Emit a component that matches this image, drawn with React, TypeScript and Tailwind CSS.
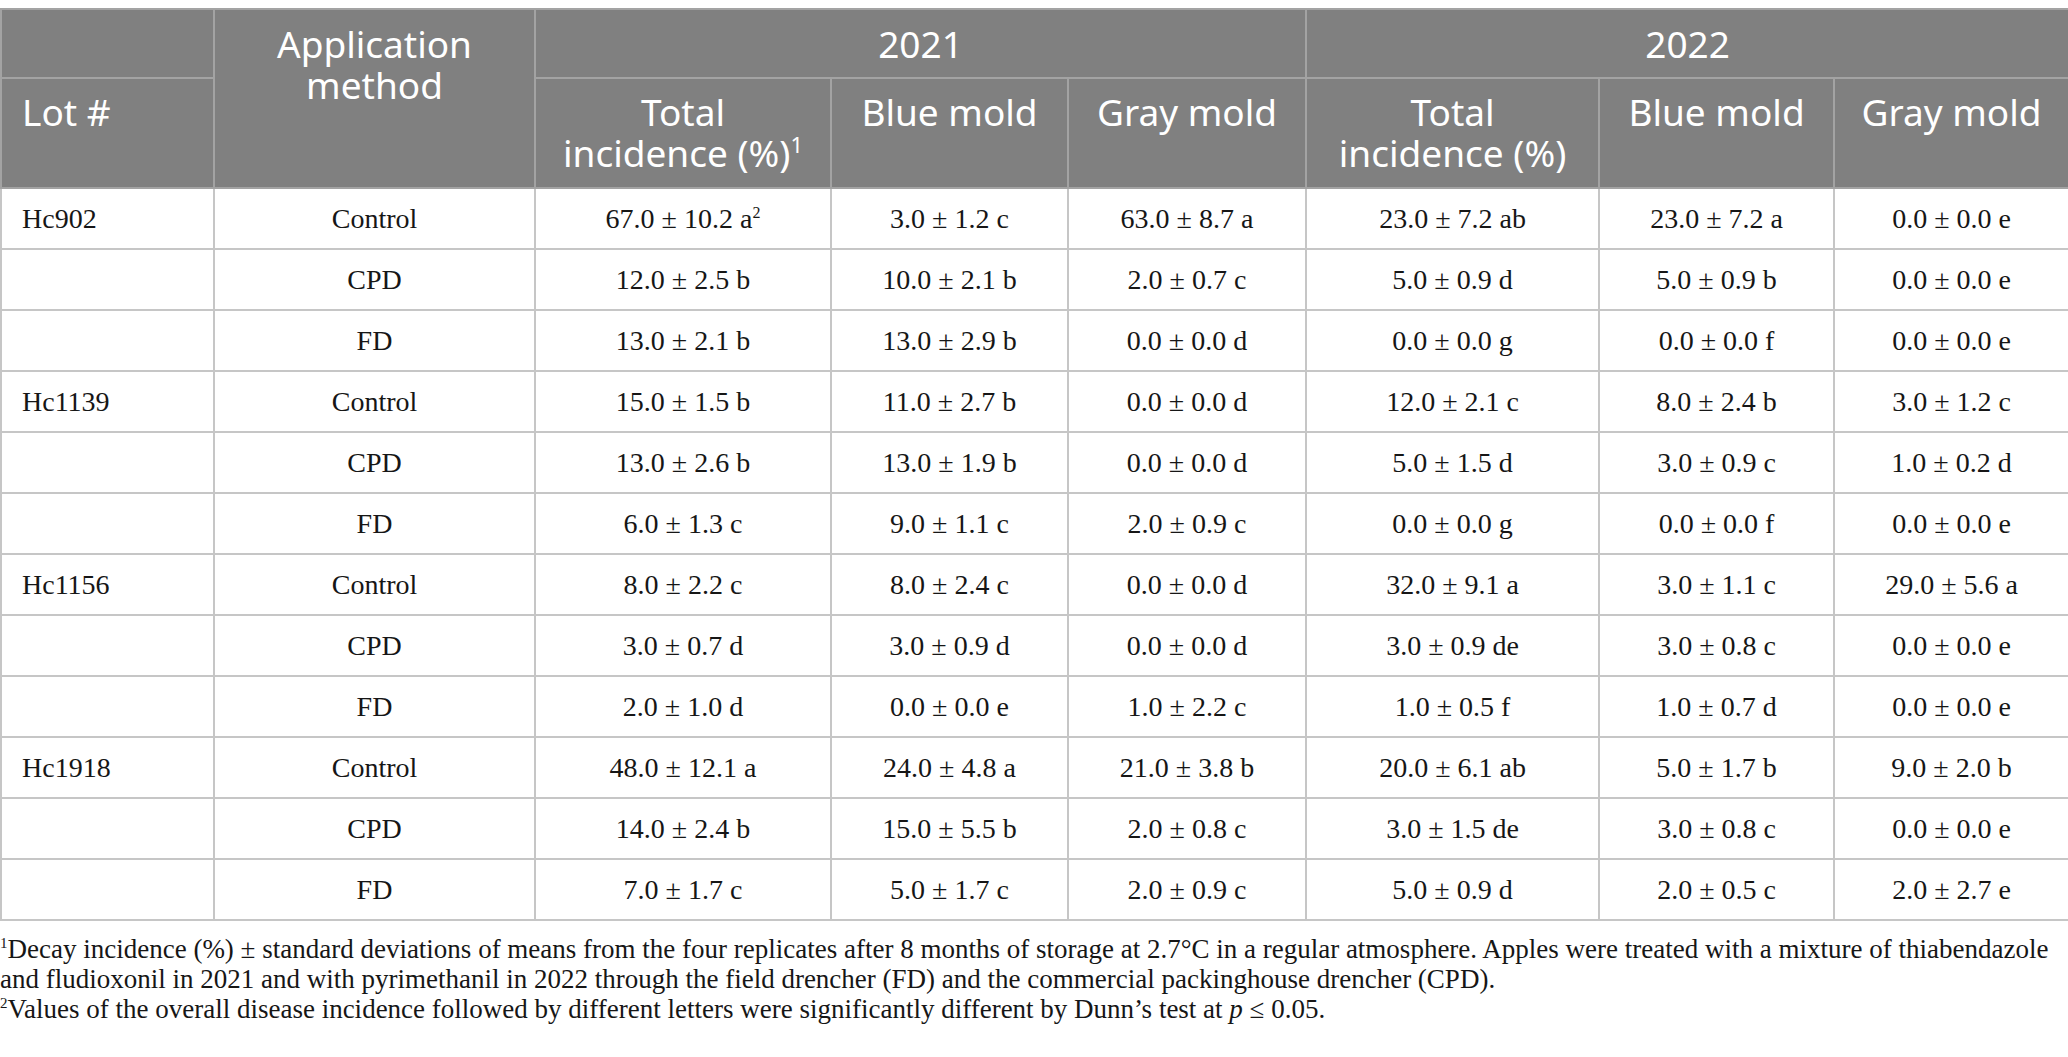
import React from 'react';

type Row = { lot: string; method: string; vals: React.ReactNode[] };

const rows: Row[] = [
  { lot: 'Hc902', method: 'Control', vals: [<>67.0 ± 10.2 a<sup className="text-[16px] relative -top-[10px]">2</sup></>, '3.0 ± 1.2 c', '63.0 ± 8.7 a', '23.0 ± 7.2 ab', '23.0 ± 7.2 a', '0.0 ± 0.0 e'] },
  { lot: '', method: 'CPD', vals: ['12.0 ± 2.5 b', '10.0 ± 2.1 b', '2.0 ± 0.7 c', '5.0 ± 0.9 d', '5.0 ± 0.9 b', '0.0 ± 0.0 e'] },
  { lot: '', method: 'FD', vals: ['13.0 ± 2.1 b', '13.0 ± 2.9 b', '0.0 ± 0.0 d', '0.0 ± 0.0 g', '0.0 ± 0.0 f', '0.0 ± 0.0 e'] },
  { lot: 'Hc1139', method: 'Control', vals: ['15.0 ± 1.5 b', '11.0 ± 2.7 b', '0.0 ± 0.0 d', '12.0 ± 2.1 c', '8.0 ± 2.4 b', '3.0 ± 1.2 c'] },
  { lot: '', method: 'CPD', vals: ['13.0 ± 2.6 b', '13.0 ± 1.9 b', '0.0 ± 0.0 d', '5.0 ± 1.5 d', '3.0 ± 0.9 c', '1.0 ± 0.2 d'] },
  { lot: '', method: 'FD', vals: ['6.0 ± 1.3 c', '9.0 ± 1.1 c', '2.0 ± 0.9 c', '0.0 ± 0.0 g', '0.0 ± 0.0 f', '0.0 ± 0.0 e'] },
  { lot: 'Hc1156', method: 'Control', vals: ['8.0 ± 2.2 c', '8.0 ± 2.4 c', '0.0 ± 0.0 d', '32.0 ± 9.1 a', '3.0 ± 1.1 c', '29.0 ± 5.6 a'] },
  { lot: '', method: 'CPD', vals: ['3.0 ± 0.7 d', '3.0 ± 0.9 d', '0.0 ± 0.0 d', '3.0 ± 0.9 de', '3.0 ± 0.8 c', '0.0 ± 0.0 e'] },
  { lot: '', method: 'FD', vals: ['2.0 ± 1.0 d', '0.0 ± 0.0 e', '1.0 ± 2.2 c', '1.0 ± 0.5 f', '1.0 ± 0.7 d', '0.0 ± 0.0 e'] },
  { lot: 'Hc1918', method: 'Control', vals: ['48.0 ± 12.1 a', '24.0 ± 4.8 a', '21.0 ± 3.8 b', '20.0 ± 6.1 ab', '5.0 ± 1.7 b', '9.0 ± 2.0 b'] },
  { lot: '', method: 'CPD', vals: ['14.0 ± 2.4 b', '15.0 ± 5.5 b', '2.0 ± 0.8 c', '3.0 ± 1.5 de', '3.0 ± 0.8 c', '0.0 ± 0.0 e'] },
  { lot: '', method: 'FD', vals: ['7.0 ± 1.7 c', '5.0 ± 1.7 c', '2.0 ± 0.9 c', '5.0 ± 0.9 d', '2.0 ± 0.5 c', '2.0 ± 2.7 e'] },
];

const widths = [213, 321, 296, 237, 238, 293, 235, 235];

const th = 'border-2 border-[#a3a3a3] align-top font-normal text-white';
const td = 'border-2 border-[#c6c6c6] text-center';

export default function App() {
  return (
    <div className="bg-white pt-2 w-[2068px] text-[#161616]">
      <table className="table-fixed border-collapse w-[2068px]">
        <colgroup>
          {widths.map((w, i) => (
            <col key={i} style={{ width: w }} />
          ))}
        </colgroup>
        <thead className="bg-[#808080] text-[37px] leading-[41px]" style={{ fontFamily: '"Noto Sans", sans-serif' }}>
          <tr className="h-[69px]">
            <th className={th}></th>
            <th rowSpan={2} className={`${th} pt-[13px] text-center`}>
              Application<br />method
            </th>
            <th colSpan={3} className={`${th} pt-[13px] text-center`}>2021</th>
            <th colSpan={3} className={`${th} pt-[13px] text-center`}>2022</th>
          </tr>
          <tr className="h-[110px]">
            <th className={`${th} pt-[12px] pl-[20px] text-left`}>Lot #</th>
            <th className={`${th} pt-[12px] text-center`}>
              Total<br />incidence (%)<sup className="text-[22px] relative -top-[14px]">1</sup>
            </th>
            <th className={`${th} pt-[12px] text-center`}>Blue mold</th>
            <th className={`${th} pt-[12px] text-center`}>Gray mold</th>
            <th className={`${th} pt-[12px] text-center`}>
              Total<br />incidence (%)
            </th>
            <th className={`${th} pt-[12px] text-center`}>Blue mold</th>
            <th className={`${th} pt-[12px] text-center`}>Gray mold</th>
          </tr>
        </thead>
        <tbody className="text-[28px] leading-[32px]" style={{ fontFamily: '"Liberation Serif", serif' }}>
          {rows.map((r, i) => (
            <tr key={i} className="h-[61px]">
              <td className="border-2 border-[#c6c6c6] pl-[20px] text-left">{r.lot}</td>
              <td className={td}>{r.method}</td>
              {r.vals.map((v, j) => (
                <td key={j} className={td}>{v}</td>
              ))}
            </tr>
          ))}
        </tbody>
      </table>
      <div className="mt-[13px] text-[27px] leading-[30px] whitespace-nowrap" style={{ fontFamily: '"Liberation Serif", serif' }}>
        <p>
          <sup className="text-[15px] relative -top-[10px]">1</sup>Decay incidence (%) ± standard deviations of means from the four replicates after 8 months of storage at 2.7°C in a regular atmosphere. Apples were treated with a mixture of thiabendazole
        </p>
        <p>and fludioxonil in 2021 and with pyrimethanil in 2022 through the field drencher (FD) and the commercial packinghouse drencher (CPD).</p>
        <p>
          <sup className="text-[15px] relative -top-[10px]">2</sup>Values of the overall disease incidence followed by different letters were significantly different by Dunn’s test at <i>p</i> ≤ 0.05.
        </p>
      </div>
    </div>
  );
}
